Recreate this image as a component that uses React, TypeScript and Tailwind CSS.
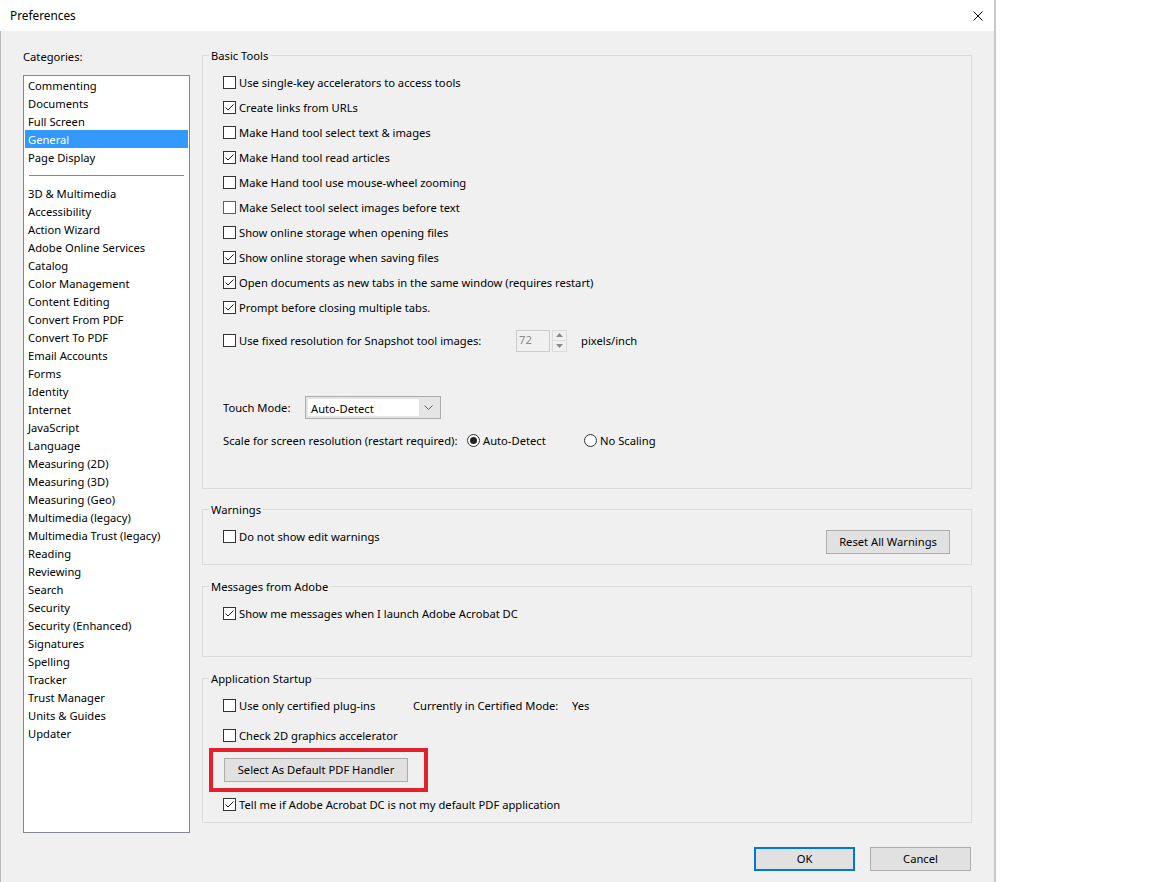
import React from 'react';

const categoriesTop = ['Commenting', 'Documents', 'Full Screen', 'General', 'Page Display'];
const categoriesRest = [
  '3D & Multimedia', 'Accessibility', 'Action Wizard', 'Adobe Online Services', 'Catalog',
  'Color Management', 'Content Editing', 'Convert From PDF', 'Convert To PDF', 'Email Accounts',
  'Forms', 'Identity', 'Internet', 'JavaScript', 'Language', 'Measuring (2D)', 'Measuring (3D)',
  'Measuring (Geo)', 'Multimedia (legacy)', 'Multimedia Trust (legacy)', 'Reading', 'Reviewing',
  'Search', 'Security', 'Security (Enhanced)', 'Signatures', 'Spelling', 'Tracker',
  'Trust Manager', 'Units & Guides', 'Updater',
];

const basicTools = [
  { label: 'Use single-key accelerators to access tools', checked: false },
  { label: 'Create links from URLs', checked: true },
  { label: 'Make Hand tool select text & images', checked: false },
  { label: 'Make Hand tool read articles', checked: true },
  { label: 'Make Hand tool use mouse-wheel zooming', checked: false },
  { label: 'Make Select tool select images before text', checked: false, focus: true },
  { label: 'Show online storage when opening files', checked: false },
  { label: 'Show online storage when saving files', checked: true },
  { label: 'Open documents as new tabs in the same window (requires restart)', checked: true },
  { label: 'Prompt before closing multiple tabs.', checked: true },
];

const CheckBox = ({ checked, focus }: { checked?: boolean; focus?: boolean }) => (
  <span
    className={`w-[13px] h-[13px] shrink-0 border bg-white flex items-center justify-center ${
      focus ? 'border-[#0078d7]' : 'border-[#333333]'
    }`}
  >
    {checked && (
      <svg width="11" height="11" viewBox="0 0 11 11">
        <polyline points="1.5,5.5 4,8 9.5,2.5" fill="none" stroke="#222" strokeWidth="1" />
      </svg>
    )}
  </span>
);

const Radio = ({ checked }: { checked?: boolean }) => (
  <span className="w-[13px] h-[13px] shrink-0 rounded-full border border-[#333333] bg-white flex items-center justify-center">
    {checked && <span className="w-[7px] h-[7px] rounded-full bg-[#222]" />}
  </span>
);

const CheckRow = ({ label, checked, focus }: { label: string; checked?: boolean; focus?: boolean }) => (
  <div className="flex items-center h-[25px] pl-[20px]">
    <CheckBox checked={checked} focus={focus} />
    <span className="ml-[3px] pt-px whitespace-nowrap">{label}</span>
  </div>
);

const Group = ({ title, className, children }: { title: string; className: string; children: React.ReactNode }) => (
  <fieldset className={`border border-[#dcdcdc] ${className}`}>
    <legend className="ml-[6px] px-[2px] leading-[16px] pt-px">{title}</legend>
    <div className="pt-[6px]">{children}</div>
  </fieldset>
);

const WinButton = ({ label, className }: { label: string; className: string }) => (
  <button className={`h-[24px] pt-px bg-[#e1e1e1] flex items-center justify-center ${className}`}>{label}</button>
);

export default function App() {
  return (
    <div className="w-[1152px] h-[882px] bg-white flex text-[11.2px] text-black font-['Noto_Sans',sans-serif] overflow-hidden">
      <div className="w-[996px] h-full flex flex-col border-r-2 border-[#c8c8c8]">
        {/* title bar */}
        <div className="h-[31px] shrink-0 bg-white flex items-center justify-between pl-[10px] pr-[11px]">
          <span className="text-[11.8px] pt-px">Preferences</span>
          <svg width="10" height="10" viewBox="0 0 10 10">
            <path d="M0.5 0.5 L9.5 9.5 M9.5 0.5 L0.5 9.5" stroke="#000" strokeWidth="1" />
          </svg>
        </div>

        <div className="flex-1 bg-[#f0f0f0] border-l border-[#b9b9b9] flex pt-[16px] pl-[22px] pr-[22px]">
          {/* categories */}
          <div className="w-[167px] flex flex-col">
            <div className="h-[16px] leading-[16px] mt-[2px]">Categories:</div>
            <div className="mt-[10px] h-[758px] border border-[#828790] bg-white">
              {categoriesTop.map(c => (
                <div
                  key={c}
                  className={`h-[18px] leading-[18px] mx-[1px] pl-[3px] pt-px whitespace-nowrap ${
                    c === 'General' ? 'bg-[#3399ff] text-white' : ''
                  }`}
                >
                  {c}
                </div>
              ))}
              <div className="h-[18px] flex items-center px-[5px]">
                <div className="h-px w-full bg-[#4a96e0]" />
              </div>
              {categoriesRest.map(c => (
                <div key={c} className="h-[18px] leading-[18px] mx-[1px] pl-[3px] pt-px whitespace-nowrap">
                  {c}
                </div>
              ))}
            </div>
          </div>

          {/* settings */}
          <div className="ml-[12px] w-[770px] flex flex-col">
            <Group title="Basic Tools" className="h-[442px]">
              {basicTools.map(t => (
                <CheckRow key={t.label} label={t.label} checked={t.checked} focus={t.focus} />
              ))}
              <div className="flex items-center h-[25px] pl-[20px] mt-[8px]">
                <CheckBox />
                <span className="ml-[3px] pt-px w-[277px] whitespace-nowrap">Use fixed resolution for Snapshot tool images:</span>
                <div className="w-[34px] h-[22px] border border-[#cccccc] bg-[#f0f0f0] text-[#8a8a8a] pl-[2px] leading-[18px]">
                  72
                </div>
                <div className="ml-[2px] w-[15px] h-[22px] flex flex-col">
                  <div className="flex-1 flex items-center justify-center border border-[#dadada] bg-[#f0f0f0]">
                    <svg width="7" height="4" viewBox="0 0 7 4"><path d="M0 4 L3.5 0 L7 4 Z" fill="#8a8a8a" /></svg>
                  </div>
                  <div className="flex-1 flex items-center justify-center border border-t-0 border-[#dadada] bg-[#f0f0f0]">
                    <svg width="7" height="4" viewBox="0 0 7 4"><path d="M0 0 L3.5 4 L7 0 Z" fill="#8a8a8a" /></svg>
                  </div>
                </div>
                <span className="ml-[14px] pt-px">pixels/inch</span>
              </div>
              <div className="flex items-center h-[25px] pl-[20px] mt-[42px]">
                <span className="w-[82px] pt-px">Touch Mode:</span>
                <div className="w-[136px] h-[23px] border border-[#adadad] bg-[#e5e5e5] flex items-center p-[2px]">
                  <div className="w-[111px] h-full bg-white pl-[3px] leading-[17px] pt-px">Auto-Detect</div>
                  <div className="flex-1 flex items-center justify-center">
                    <svg width="9" height="5" viewBox="0 0 9 5">
                      <path d="M0.5 0.5 L4.5 4.5 L8.5 0.5" fill="none" stroke="#606060" strokeWidth="1" />
                    </svg>
                  </div>
                </div>
              </div>
              <div className="flex items-center h-[25px] pl-[20px] mt-[8px]">
                <span className="w-[244px] pt-px whitespace-nowrap">Scale for screen resolution (restart required):</span>
                <Radio checked />
                <span className="ml-[3px] pt-px w-[101px]">Auto-Detect</span>
                <Radio />
                <span className="ml-[3px] pt-px">No Scaling</span>
              </div>
            </Group>

            <Group title="Warnings" className="h-[64px] mt-[12px]">
              <div className="flex items-start justify-between">
                <CheckRow label="Do not show edit warnings" />
                <WinButton label="Reset All Warnings" className="w-[124px] mt-[6px] mr-[21px] border border-[#adadad]" />
              </div>
            </Group>

            <Group title="Messages from Adobe" className="h-[79px] mt-[13px]">
              <CheckRow label="Show me messages when I launch Adobe Acrobat DC" checked />
            </Group>

            <Group title="Application Startup" className="h-[153px] mt-[13px]">
              <div className="flex items-center h-[25px] pl-[20px]">
                <CheckBox />
                <span className="ml-[3px] pt-px w-[174px] whitespace-nowrap">Use only certified plug-ins</span>
                <span className="w-[159px] pt-px whitespace-nowrap">Currently in Certified Mode:</span>
                <span className="pt-px">Yes</span>
              </div>
              <div className="mt-[5px]">
                <CheckRow label="Check 2D graphics accelerator" />
              </div>
              <div className="ml-[6px] w-[219px] h-[44px] border-4 border-[#e3212d] flex items-center pl-[11px]">
                <WinButton label="Select As Default PDF Handler" className="w-[184px] border border-[#adadad]" />
              </div>
              <CheckRow label="Tell me if Adobe Acrobat DC is not my default PDF application" checked />
            </Group>

            <div className="mt-[24px] flex justify-end gap-[15px] pr-[1px]">
              <WinButton label="OK" className="w-[101px] border-2 border-[#0078d7]" />
              <WinButton label="Cancel" className="w-[101px] border border-[#adadad]" />
            </div>
          </div>
        </div>
      </div>
      <div className="flex-1 bg-white" />
    </div>
  );
}
